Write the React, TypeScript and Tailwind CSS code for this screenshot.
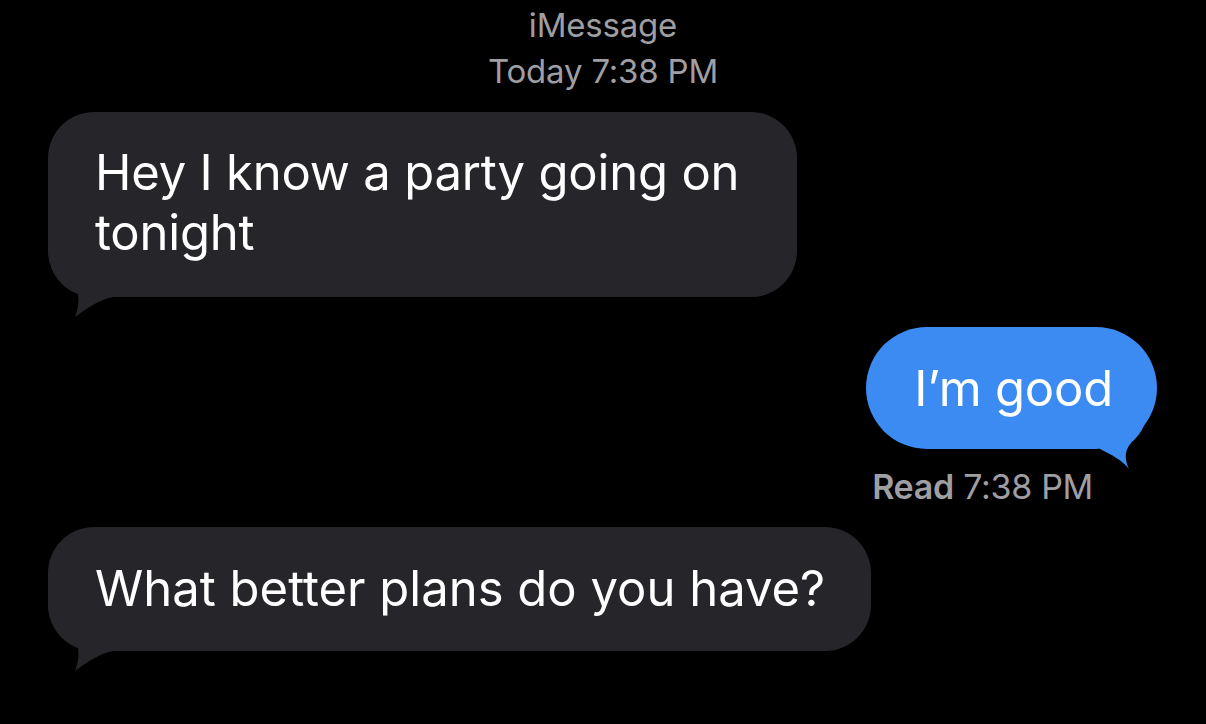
function Incoming({ children, className }: { children: React.ReactNode; className?: string }) {
  return (
    <div className={`relative self-start ml-[48px] ${className ?? ''}`}>
      <svg className="absolute left-0 bottom-[-22px]" width="80" height="70" viewBox="0 0 80 70">
        <path d="M20 30 C30 38 34 50 27 68 C38 60 52 50 66 48 L66 20 Z" fill="#262529" />
      </svg>
      <div className="relative rounded-[46px] bg-[#262529] text-white">{children}</div>
    </div>
  );
}

export default function App() {
  return (
    <div className="w-[1206px] h-[724px] bg-black overflow-hidden flex flex-col font-['Inter',sans-serif]">
      <div className="pt-[2px] flex flex-col items-center text-[#9e9ea3] text-[33px] leading-[46px] tracking-[-0.2px]">
        <div>iMessage</div>
        <div>Today 7:38 PM</div>
      </div>

      <Incoming className="mt-[18px] w-[749px]">
        <div className="pl-[47px] pr-[40px] pt-[31px] pb-[34px] text-[49px] leading-[60px] tracking-[-0.2px]">
          Hey I know a party going on
          <br />
          tonight
        </div>
      </Incoming>

      <div className="relative self-end mr-[49px] mt-[30px]">
        <svg className="absolute right-[-3px] bottom-[-21px]" width="70" height="60" viewBox="0 0 70 60">
          <path d="M10 39 C22 45 32 50 39 59 C35 50 33 40 44 30 C52 22 56 14 58 0 L10 0 Z" fill="#3b8bf2" />
        </svg>
        <div className="relative rounded-[61px] bg-[#3b8bf2] text-white pl-[48px] pr-[44px] pt-[32px] pb-[30px] text-[49px] leading-[60px] tracking-[-0.2px]">
          I’m good
        </div>
      </div>
      <div className="self-end mr-[113px] mt-[18px] text-[34px] leading-[40px] tracking-[-0.3px] text-[#9e9ea3]">
        <span className="font-semibold">Read</span> 7:38 PM
      </div>

      <Incoming className="mt-[20px]">
        <div className="pl-[47px] pr-[46px] pt-[32px] pb-[32px] text-[49px] leading-[60px] tracking-[0px]">
          What better plans do you have?
        </div>
      </Incoming>
    </div>
  );
}
